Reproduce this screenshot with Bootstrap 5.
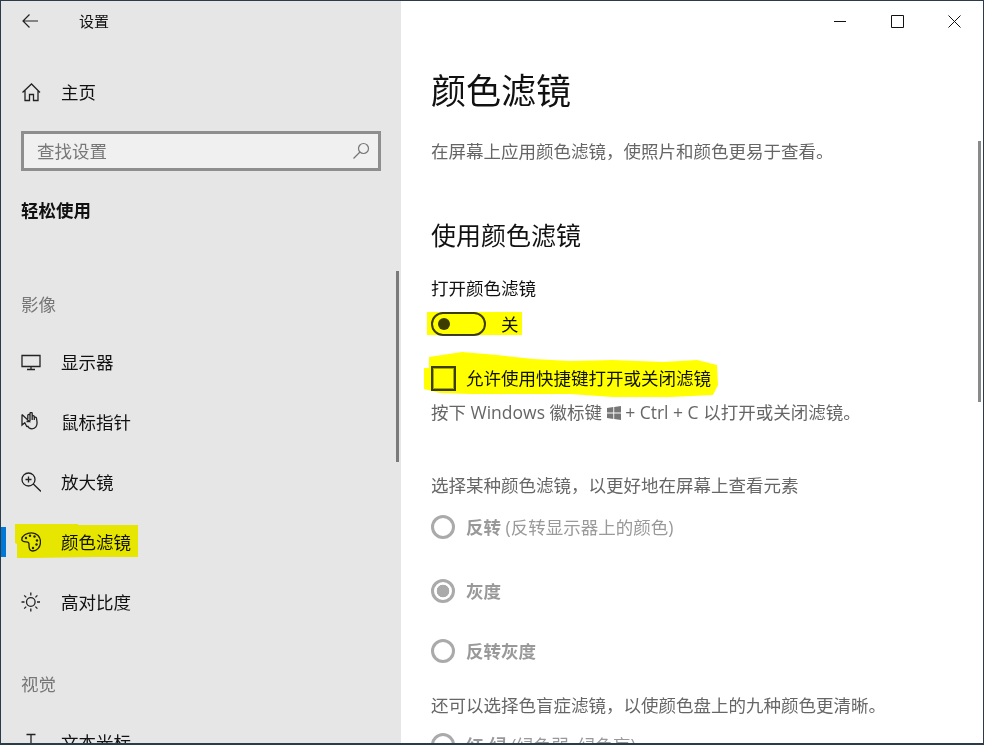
<!DOCTYPE html>
<html lang="zh-CN">
<head>
<meta charset="utf-8">
<title>设置</title>
<link rel="stylesheet" href="https://cdn.jsdelivr.net/npm/bootstrap@5.3.0/dist/css/bootstrap.min.css">
<style>
html,body{margin:0;height:745px;overflow:hidden;background:#fff}
body{font-family:"Open Sans","Noto Sans CJK SC",sans-serif;font-size:17.5px;color:#111}
.win{position:relative;width:984px;height:745px;overflow:hidden;border-style:solid;border-width:1px 1px 2px 1px;border-color:#2c3b4a}
.win-edge{position:absolute;left:-1px;top:0;width:1px;height:100%;background:linear-gradient(#2c3b4a 0,#2c3b4a 40%,#6b5a4a 65%,#54473c 85%,#2c3b4a 100%)}
.side{width:400px;flex:none;background:#e6e6e6;height:100%;overflow:hidden}
.side>*{flex:none}
.pane{flex:1 1 auto;height:100%;overflow:hidden;padding-left:30px;background:#fff}
.topbar{height:40px}
.back{width:20px;margin-left:20px}
.app-title{font-size:15px;margin-left:38px;line-height:20px}
.nav-row{height:60px;padding-left:20px;color:#111;line-height:26px;position:relative}
.nav-row svg{width:20px;height:20px;flex:none;margin-right:20px;fill:none;stroke:#222;stroke-width:1.3}
.home-row{margin-top:21px}
.search-box{margin:9px 0 0 20px;width:360px;height:40px;background:#f0f0f0;border:3px solid #8e8e8e;border-radius:0;padding:0 8px 0 13px}
.search-box input{background:transparent;border:0;box-shadow:none;padding:0;font-size:17.5px;line-height:26px;color:#111}
.search-box input::placeholder{color:#777}
.search-box input:focus{background:transparent;box-shadow:none}
.search-box svg{width:18px;height:18px;flex:none;fill:none;stroke:#777;stroke-width:1.2}
.side-title{margin:26px 0 0 20px;font-weight:700;line-height:26px}
.group-title{margin-left:20px;color:#777;line-height:26px}
.gt-a{margin-top:68px;margin-bottom:15px}
.gt-b{margin-top:39px;margin-bottom:15px}
.indicator{position:absolute;left:0;top:15px;width:5px;height:30px;background:#0078d7}
.win-btns{height:40px}
.win-btns svg{width:57px;height:40px;fill:none;stroke:#111;stroke-width:1}
.h-main{font-size:35px;line-height:50px;font-weight:400;margin:25px 0 0}
.desc{line-height:26px;color:#666;margin:22px 0 0}
.h-sub{font-size:25px;line-height:36px;font-weight:400;margin:53px 0 0}
.lbl{line-height:26px;margin:22px 0 0;color:#111}
.row-24{height:24px;line-height:24px}
.tog-row{margin-top:11px}
.tog{width:55px;height:24px;border:2px solid #3d3d3d;border-radius:12px;background:#fff;padding-left:5px;flex:none}
.knob{width:12px;height:12px;border-radius:50%;background:#3d3d3d}
.tog-text{margin-left:15px}
.chk-row{margin-top:30px}
.form-check-input.chk{width:25px;height:25px;margin:0 10px 0 0;border:2px solid #3d3d3d;border-radius:0;flex:none;background-color:#fff;box-shadow:inset 0 0 0 1px #aaa}
.hint{line-height:26px;color:#666;margin:9px 0 0}
.hint svg{width:14px;height:14px;fill:#777;vertical-align:-1px}
.muted-txt{line-height:26px;color:#666}
.pick{margin:47px 0 0}
.again{margin:29px 0 0}
.rad{height:24px;line-height:24px;color:#999;margin:0;padding:0}
.rad .form-check-input{width:24px;height:24px;margin:0 11px 0 0;float:none;flex:none;border:3px solid #aaa;background-color:#fff;opacity:1;background-image:none}
.rad .form-check-input:checked{background-color:#fff;border-color:#aaa;background-image:radial-gradient(circle,#aaa 0,#aaa 6px,#fff 6.6px)}
.rad .form-check-input[disabled]~.form-check-label{opacity:1;color:#999}
.r1{margin-top:17px}.r2{margin-top:40px}.r3{margin-top:36px}.r4{margin-top:15px}
.sbar{position:absolute;width:3px}
.sb-side{left:395px;top:270px;height:191px;background:#7a7a7a}
.sb-main{left:977px;top:140px;height:261px;background:#8a8a8a}
.marker{position:absolute;left:-1px;top:-1px;width:984px;height:745px;mix-blend-mode:multiply;pointer-events:none}
.btns-out{margin-left:-30px}
</style>
</head>
<body>
<div class="win d-flex">
  <div class="win-edge"></div>
  <aside class="side d-flex flex-column">
    <div class="topbar d-flex align-items-center">
      <svg class="back" height="20" viewBox="0 0 20 20" fill="none" stroke="#222" stroke-width="1.2"><path d="M2 10H17M8.5 3.5 2 10l6.5 6.5"/></svg>
      <span class="app-title">设置</span>
    </div>
    <div class="nav-row home-row d-flex align-items-center">
      <svg viewBox="0 0 20 20"><path d="M1.5 10.5 10.5 2l8.5 8.5M4 8.5V18.500h4.500v-6h4v6H17V8.500"/></svg>
      <span>主页</span>
    </div>
    <div class="search-box d-flex align-items-center">
      <input class="form-control" type="text" placeholder="查找设置">
      <svg viewBox="0 0 18 18"><circle cx="11.500" cy="6.500" r="5"/><path d="M8 10 1.500 16.500"/></svg>
    </div>
    <div class="side-title">轻松使用</div>
    <div class="group-title gt-a">影像</div>
    <nav class="nav flex-column">
      <div class="nav-row d-flex align-items-center">
        <svg viewBox="0 0 20 20"><path d="M1 3.500H19V14.500H1ZM10 14.500V17.500M6 17.500H14"/></svg>
        <span>显示器</span>
      </div>
      <div class="nav-row d-flex align-items-center">
        <svg viewBox="0 0 20 20"><path d="M1 2.500V13l2.800-2.300L6 15M1 2.500 8.500 9.500H5.500M6.800 7V3.500c0-1.600 2.200-1.600 2.200 0V9M9 8V1.500c0-1.400 2.200-1.400 2.200 0V8M11.200 4.500c0-1.300 2.100-1.300 2.100.2V8M13.300 6c.2-1.300 2.100-1.200 2.200.3l.5 3.700c.4 4-1.700 6.800-5 6.800-2.200 0-3.800-1.200-4.500-3"/></svg>
        <span>鼠标指针</span>
      </div>
      <div class="nav-row d-flex align-items-center">
        <svg viewBox="0 0 20 20"><circle cx="7.500" cy="7.500" r="6.500"/><path d="M12.300 12 20 19.500M7.500 4.500V10.500M4.500 7.500H10.500"/></svg>
        <span>放大镜</span>
      </div>
      <div class="nav-row d-flex align-items-center">
        <div class="indicator"></div>
        <svg viewBox="0 0 20 20"><path d="M10.500.8C5.500.8.800 3.800.800 7.300c0 2.500 2.500 2.500 4.200 2.500 3.500 0 3 2 3 4 0 3 1.500 5.200 3.800 5.200 4.200 0 7.700-4 7.700-9S16 .8 10.500.8Z"/><g fill="#222" stroke="none"><circle cx="5" cy="6" r="1.200"/><circle cx="9" cy="3.700" r="1.200"/><circle cx="13.500" cy="4.500" r="1.200"/><circle cx="16" cy="8.500" r="1.200"/><circle cx="15.500" cy="12.500" r="1.200"/><circle cx="12" cy="16" r="1.200"/></g></svg>
        <span>颜色滤镜</span>
      </div>
      <div class="nav-row d-flex align-items-center">
        <svg viewBox="0 0 20 20"><circle cx="9.800" cy="10" r="4.300"/><path d="M9.800 .5V3.500M9.800 16.500V19.500M.5 10H3.500M16 10H19M3.200 3.400 5.200 5.400M14.400 14.600 16.400 16.600M3.200 16.600 5.200 14.600M14.400 5.400 16.400 3.400"/></svg>
        <span>高对比度</span>
      </div>
    </nav>
    <div class="group-title gt-b">视觉</div>
    <div class="nav-row d-flex align-items-center">
      <svg viewBox="0 0 20 20"><path d="M5.500 2.500H14.500M10 2.500V18M7 18H13"/></svg>
      <span>文本光标</span>
    </div>
  </aside>
  <main class="pane">
    <div class="win-btns btns-out d-flex justify-content-end align-items-center">
      <svg viewBox="0 0 57 40"><path d="M22 20.500H34"/></svg>
      <svg viewBox="0 0 57 40"><path d="M22.500 14.500H34.500V26.500H22.500Z"/></svg>
      <svg viewBox="0 0 57 40"><path d="M22.500 14.500 34.500 26.500M34.500 14.500 22.500 26.500"/></svg>
    </div>
    <h1 class="h-main">颜色滤镜</h1>
    <p class="desc">在屏幕上应用颜色滤镜，使照片和颜色更易于查看。</p>
    <h2 class="h-sub">使用颜色滤镜</h2>
    <div class="lbl">打开颜色滤镜</div>
    <div class="row-24 tog-row d-flex align-items-center">
      <div class="tog d-flex align-items-center"><div class="knob"></div></div>
      <span class="tog-text">关</span>
    </div>
    <div class="row-24 chk-row d-flex align-items-center">
      <input class="form-check-input chk" type="checkbox" aria-label="允许使用快捷键打开或关闭滤镜">
      <span>允许使用快捷键打开或关闭滤镜</span>
    </div>
    <p class="hint">按下 Windows 徽标键 <svg viewBox="0 0 14 14"><path d="M0 2 6.300 1V6.500H0ZM7.200.9 14 0V6.500H7.200ZM0 7.500H6.300V13L0 12ZM7.200 7.500H14V14L7.200 13.100Z"/></svg> + Ctrl + C 以打开或关闭滤镜。</p>
    <p class="muted-txt pick">选择某种颜色滤镜，以更好地在屏幕上查看元素</p>
    <div class="form-check rad r1 d-flex align-items-center"><input class="form-check-input" type="radio" name="f" id="f1" disabled><label class="form-check-label" for="f1"><b>反转</b> (反转显示器上的颜色)</label></div>
    <div class="form-check rad r2 d-flex align-items-center"><input class="form-check-input" type="radio" name="f" id="f2" disabled checked><label class="form-check-label" for="f2"><b>灰度</b></label></div>
    <div class="form-check rad r3 d-flex align-items-center"><input class="form-check-input" type="radio" name="f" id="f3" disabled><label class="form-check-label" for="f3"><b>反转灰度</b></label></div>
    <p class="muted-txt again">还可以选择色盲症滤镜，以使颜色盘上的九种颜色更清晰。</p>
    <div class="form-check rad r4 d-flex align-items-center"><input class="form-check-input" type="radio" name="f" id="f4" disabled><label class="form-check-label" for="f4"><b>红-绿</b> (绿色弱, 绿色盲)</label></div>
  </main>
  <div class="sbar sb-side"></div>
  <div class="sbar sb-main"></div>
  <svg class="marker" viewBox="0 0 984 745" fill="#ffff00">
    <path d="M15 524H78V525H138V557H95L33 558H17V544L15 543Z"/>
    <path d="M427 312H522V335H427Z"/>
    <path d="M429 357 462 352 497 355 533 359 570 361 613 360 663 362 697 360 717 365 718 385 713 395 670 397 613 397 570 394 470 394 440 393 424 389V368H429Z"/>
  </svg>
</div>
</body>
</html>
